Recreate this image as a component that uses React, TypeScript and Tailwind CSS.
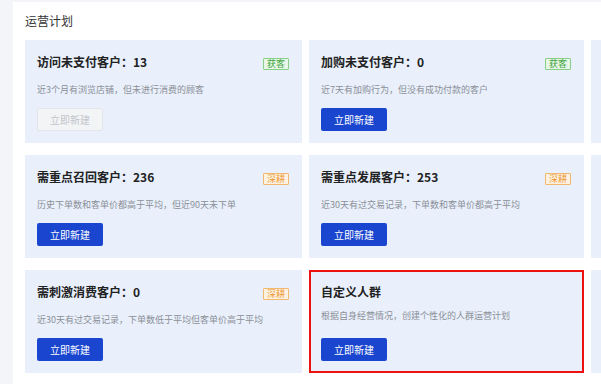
import React from 'react';

type Tag = 'acquire' | 'deepen';

interface Plan {
  title: string;
  count?: number;
  desc: string;
  tag?: Tag;
  disabled?: boolean;
  highlighted?: boolean;
}

const plans: Plan[] = [
  { title: '访问未支付客户', count: 13, desc: '近3个月有浏览店铺，但未进行消费的顾客', tag: 'acquire', disabled: true },
  { title: '加购未支付客户', count: 0, desc: '近7天有加购行为，但没有成功付款的客户', tag: 'acquire' },
  { title: '', desc: '' },
  { title: '需重点召回客户', count: 236, desc: '历史下单数和客单价都高于平均，但近90天未下单', tag: 'deepen' },
  { title: '需重点发展客户', count: 253, desc: '近30天有过交易记录，下单数和客单价都高于平均', tag: 'deepen' },
  { title: '', desc: '' },
  { title: '需刺激消费客户', count: 0, desc: '近30天有过交易记录，下单数低于平均但客单价高于平均', tag: 'deepen' },
  { title: '自定义人群', desc: '根据自身经营情况，创建个性化的人群运营计划', highlighted: true },
  { title: '', desc: '' },
];

const TagBadge: React.FC<{ tag: Tag }> = ({ tag }) => {
  const isAcquire = tag === 'acquire';
  return (
    <span
      className={
        isAcquire
          ? 'mt-[4px] mr-px h-[12px] px-[3px] border border-[#86cf86] bg-[#e8f6e8] text-[#3ea53e] text-[9px] leading-[10px] rounded-[1px]'
          : 'mt-[4px] mr-px h-[12px] px-[3px] border border-[#f1b86e] bg-[#fdf1e2] text-[#ee9a30] text-[9px] leading-[10px] rounded-[1px]'
      }
    >
      {isAcquire ? '获客' : '深耕'}
    </span>
  );
};

const PlanCard: React.FC<{ plan: Plan }> = ({ plan }) => {
  if (!plan.title) {
    return <div className="h-[103px] bg-[#e9f0fc]" />;
  }

  return (
    <div
      className={
        plan.highlighted
          ? 'h-[103px] bg-[#e9f0fc] px-[12px] pt-[14px] pb-[12px] flex flex-col ring-2 ring-inset ring-[#ee1111]'
          : 'h-[103px] bg-[#e9f0fc] px-[12px] pt-[14px] pb-[12px] flex flex-col'
      }
    >
      <div className="flex items-start justify-between h-[16px]">
        <div className="text-[12px] leading-[16px] font-bold text-[#222]">
          {plan.title}
          {plan.count !== undefined && `：${plan.count}`}
        </div>
        {plan.tag && <TagBadge tag={plan.tag} />}
      </div>
      <div
        className={
          plan.highlighted
            ? 'mt-[9px] text-[9px] leading-[13px] text-[#8b8f97]'
            : 'mt-[12.5px] text-[9px] leading-[13px] text-[#8b8f97]'
        }
      >
        {plan.desc}
      </div>
      <div className="mt-auto">
        {plan.disabled ? (
          <button
            type="button"
            disabled
            className="w-[66px] h-[23px] rounded-[2px] border border-[#e3e5e9] bg-[#f3f4f6] text-[10px] text-[#c2c5cb]"
          >
            立即新建
          </button>
        ) : (
          <button
            type="button"
            className="w-[66px] h-[23px] rounded-[2px] bg-[#1a45cf] text-[10px] text-white"
          >
            立即新建
          </button>
        )}
      </div>
    </div>
  );
};

export default function App() {
  return (
    <div
      className="w-[601px] h-[384px] overflow-hidden bg-[#f4f5f8] pl-[13px] pt-[2px]"
      style={{ fontFamily: '"Noto Sans CJK SC", "Noto Sans", sans-serif' }}
    >
      <div className="h-full bg-white pl-[12px] pt-[11px]">
        <h2 className="text-[12px] leading-[16px] text-[#333] font-normal mb-[11px]">运营计划</h2>
        <div className="grid grid-cols-[277px_275px_277px] gap-x-[7px] gap-y-[12px]">
          {plans.map((plan, i) => (
            <PlanCard key={i} plan={plan} />
          ))}
        </div>
      </div>
    </div>
  );
}
